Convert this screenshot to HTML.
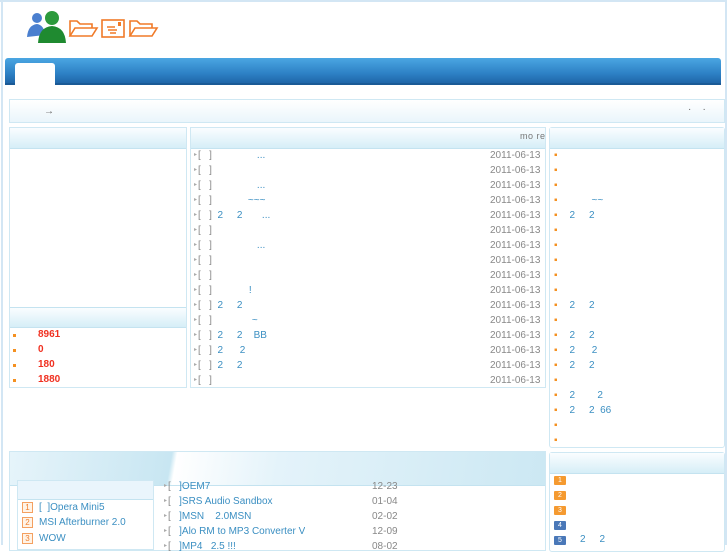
<!DOCTYPE html>
<html><head><meta charset="utf-8"><style>
*{margin:0;padding:0;box-sizing:border-box}
body{width:727px;height:545px;overflow:hidden;background:#fff;font-family:"Liberation Sans","Noto Sans CJK SC",sans-serif;font-size:10px;color:#888;position:relative}
.a{position:absolute;white-space:nowrap}
.l>div{height:15px;line-height:15px;overflow:hidden}
.box{position:absolute;border:1px solid #cfe8f3;background:#fff}
.hd{position:absolute;left:0;right:0;top:0;background:linear-gradient(#fafdff,#d6eef7);border-bottom:1px solid #c4e3f0}
.b{color:#3b8fc2}
.r{color:#f03020;font-weight:bold}
.dot{position:absolute;width:3px;height:3px;background:#f49020}
.tri{color:#aaa;font-size:6px;vertical-align:middle;margin-right:1px}
.bd{position:absolute;width:12px;height:9px;border-radius:1px;color:#fff;font-size:7px;text-align:center;line-height:9px}
.nb{position:absolute;width:11px;height:11px;border:1px solid #f4a060;background:#fff3e6;color:#f08030;font-size:8px;text-align:center;line-height:9px}
</style></head><body>
<div class="a" style="left:1px;top:0;width:2px;height:545px;background:#d3e6f4"></div>
<div class="a" style="left:725px;top:0;width:2px;height:545px;background:#d3e6f4"></div>
<div class="a" style="left:0;top:0;width:727px;height:2px;background:#d3e6f4"></div>
<svg class="a" style="left:24px;top:9px" width="140" height="36" viewBox="0 0 140 36">
<circle cx="13" cy="9" r="5" fill="#4a7fcf"/><path d="M3 28 Q4 16 13 15 Q20 16 21 26 Z" fill="#4a7fcf"/>
<circle cx="28" cy="9" r="7" fill="#2c9a3c"/><path d="M14 34 Q15 18 28 17 Q41 18 42 34 Z" fill="#1f8a30"/>
<g fill="none" stroke="#f07a28" stroke-width="1.6">
<path d="M46 27 L46 12 L53 12 L56 15 L68 15 L68 19"/><path d="M46 27 L51 19 L73 19 L68 27 Z"/>
<rect x="78" y="11" width="22" height="17"/><path d="M83 18h8M84 21h9M86 24h6"/>
<path d="M106 27 L106 12 L113 12 L116 15 L128 15 L128 19"/><path d="M106 27 L111 19 L133 19 L128 27 Z"/>
</g><rect x="94" y="13" width="3" height="4" fill="#f07a28"/>
</svg>
<div class="a" style="left:5px;top:58px;width:716px;height:27px;border-radius:3px 3px 0 0;background:linear-gradient(#4ba6e2,#2e82c6 60%,#1f66a8);border-bottom:2px solid #1a5a96"></div>
<div class="a" style="left:15px;top:63px;width:40px;height:22px;background:#fff;border-radius:3px 3px 0 0"></div>
<div class="a" style="left:9px;top:99px;width:716px;height:24px;border:1px solid #cfe8f3;background:linear-gradient(#fff,#eaf5fb)"></div>
<div class="a" style="left:44px;top:106px;color:#666">→</div>
<div class="a" style="left:688px;top:104px;color:#666">·&nbsp;&nbsp;&nbsp;&nbsp;·</div>
<div class="box" style="left:9px;top:127px;width:178px;height:261px"><div class="hd" style="height:21px"></div><div class="hd" style="top:179px;height:21px;border-top:1px solid #c4e3f0"></div></div>
<div class="dot" style="left:13px;top:334px"></div><div class="a r" style="left:38px;top:329px">8961</div>
<div class="dot" style="left:13px;top:349px"></div><div class="a r" style="left:38px;top:344px">0</div>
<div class="dot" style="left:13px;top:364px"></div><div class="a r" style="left:38px;top:359px">180</div>
<div class="dot" style="left:13px;top:379px"></div><div class="a r" style="left:38px;top:374px">1880</div>
<div class="box" style="left:190px;top:127px;width:356px;height:261px"><div class="hd" style="height:21px"></div></div>
<div class="a" style="left:520px;top:131px;color:#777;font-size:9px;letter-spacing:0.5px">mo re</div>
<div class="a l" style="left:194px;top:148px">
<div><span class="tri">▸</span>[&nbsp;&nbsp;&nbsp;]<span class="b" style="margin-left:45px">...</span></div>
<div><span class="tri">▸</span>[&nbsp;&nbsp;&nbsp;]</div>
<div><span class="tri">▸</span>[&nbsp;&nbsp;&nbsp;]<span class="b" style="margin-left:45px">...</span></div>
<div><span class="tri">▸</span>[&nbsp;&nbsp;&nbsp;]<span class="b" style="margin-left:36px">~~~</span></div>
<div><span class="tri">▸</span>[&nbsp;&nbsp;&nbsp;]&nbsp;&nbsp;<span class="b">2&nbsp;&nbsp;&nbsp;&nbsp;&nbsp;2&nbsp;&nbsp;&nbsp;&nbsp;&nbsp;&nbsp;&nbsp;...</span></div>
<div><span class="tri">▸</span>[&nbsp;&nbsp;&nbsp;]</div>
<div><span class="tri">▸</span>[&nbsp;&nbsp;&nbsp;]<span class="b" style="margin-left:45px">...</span></div>
<div><span class="tri">▸</span>[&nbsp;&nbsp;&nbsp;]</div>
<div><span class="tri">▸</span>[&nbsp;&nbsp;&nbsp;]</div>
<div><span class="tri">▸</span>[&nbsp;&nbsp;&nbsp;]<span class="b" style="margin-left:37px">!</span></div>
<div><span class="tri">▸</span>[&nbsp;&nbsp;&nbsp;]&nbsp;&nbsp;<span class="b">2&nbsp;&nbsp;&nbsp;&nbsp;&nbsp;2</span></div>
<div><span class="tri">▸</span>[&nbsp;&nbsp;&nbsp;]<span class="b" style="margin-left:40px">~</span></div>
<div><span class="tri">▸</span>[&nbsp;&nbsp;&nbsp;]&nbsp;&nbsp;<span class="b">2&nbsp;&nbsp;&nbsp;&nbsp;&nbsp;2&nbsp;&nbsp;&nbsp;&nbsp;BB</span></div>
<div><span class="tri">▸</span>[&nbsp;&nbsp;&nbsp;]&nbsp;&nbsp;<span class="b">2&nbsp;&nbsp;&nbsp;&nbsp;&nbsp;&nbsp;2</span></div>
<div><span class="tri">▸</span>[&nbsp;&nbsp;&nbsp;]&nbsp;&nbsp;<span class="b">2&nbsp;&nbsp;&nbsp;&nbsp;&nbsp;2</span></div>
<div><span class="tri">▸</span>[&nbsp;&nbsp;&nbsp;]</div>
</div>
<div class="a" style="left:490px;top:148px;line-height:15px;width:50px;text-align:right;color:#888">
2011-06-13<br>2011-06-13<br>2011-06-13<br>2011-06-13<br>2011-06-13<br>2011-06-13<br>2011-06-13<br>2011-06-13<br>2011-06-13<br>2011-06-13<br>2011-06-13<br>2011-06-13<br>2011-06-13<br>2011-06-13<br>2011-06-13<br>2011-06-13</div>
<div class="box" style="left:549px;top:127px;width:176px;height:321px;border-radius:3px"><div class="hd" style="height:21px"></div></div>
<div class="a l" style="left:554px;top:148px">
<div><span style="color:#f49020">▪</span></div>
<div><span style="color:#f49020">▪</span></div>
<div><span style="color:#f49020">▪</span></div>
<div><span style="color:#f49020">▪</span><span class="b" style="margin-left:34px">~~</span></div>
<div><span style="color:#f49020">▪</span><span class="b" style="margin-left:12px">2&nbsp;&nbsp;&nbsp;&nbsp;&nbsp;2</span></div>
<div><span style="color:#f49020">▪</span></div>
<div><span style="color:#f49020">▪</span></div>
<div><span style="color:#f49020">▪</span></div>
<div><span style="color:#f49020">▪</span></div>
<div><span style="color:#f49020">▪</span></div>
<div><span style="color:#f49020">▪</span><span class="b" style="margin-left:12px">2&nbsp;&nbsp;&nbsp;&nbsp;&nbsp;2</span></div>
<div><span style="color:#f49020">▪</span></div>
<div><span style="color:#f49020">▪</span><span class="b" style="margin-left:12px">2&nbsp;&nbsp;&nbsp;&nbsp;&nbsp;2</span></div>
<div><span style="color:#f49020">▪</span><span class="b" style="margin-left:12px">2&nbsp;&nbsp;&nbsp;&nbsp;&nbsp;&nbsp;2</span></div>
<div><span style="color:#f49020">▪</span><span class="b" style="margin-left:12px">2&nbsp;&nbsp;&nbsp;&nbsp;&nbsp;2</span></div>
<div><span style="color:#f49020">▪</span></div>
<div><span style="color:#f49020">▪</span><span class="b" style="margin-left:12px">2&nbsp;&nbsp;&nbsp;&nbsp;&nbsp;&nbsp;&nbsp;&nbsp;2</span></div>
<div><span style="color:#f49020">▪</span><span class="b" style="margin-left:12px">2&nbsp;&nbsp;&nbsp;&nbsp;&nbsp;2&nbsp;&nbsp;66</span></div>
<div><span style="color:#f49020">▪</span></div>
<div><span style="color:#f49020">▪</span></div>
</div>
<div class="box" style="left:9px;top:451px;width:537px;height:100px"><div class="hd" style="height:34px;background:linear-gradient(100deg,#e6f4fa 0%,#c8e6f2 30%,#fff 31%,#e4f3fa 50%,#cce8f3 100%)"></div></div>
<div class="box" style="left:17px;top:480px;width:137px;height:70px"><div class="hd" style="height:19px;background:#eaf5fc"></div></div>
<div class="nb" style="left:22px;top:502px">1</div><div class="a b" style="left:39px;top:502px">[&nbsp;&nbsp;]Opera Mini5</div>
<div class="nb" style="left:22px;top:517px">2</div><div class="a b" style="left:39px;top:517px">MSI Afterburner 2.0</div>
<div class="nb" style="left:22px;top:533px">3</div><div class="a b" style="left:39px;top:533px">WOW</div>
<div class="a l" style="left:164px;top:479px">
<div><span class="tri">▸</span>[&nbsp;&nbsp;&nbsp;<span class="b">]OEM7</span></div>
<div><span class="tri">▸</span>[&nbsp;&nbsp;&nbsp;<span class="b">]SRS Audio Sandbox</span></div>
<div><span class="tri">▸</span>[&nbsp;&nbsp;&nbsp;<span class="b">]MSN&nbsp;&nbsp;&nbsp;&nbsp;2.0MSN</span></div>
<div><span class="tri">▸</span>[&nbsp;&nbsp;&nbsp;<span class="b">]Alo RM to MP3 Converter V</span></div>
<div><span class="tri">▸</span>[&nbsp;&nbsp;&nbsp;<span class="b">]MP4&nbsp;&nbsp;&nbsp;2.5 !!!</span></div>
</div>
<div class="a" style="left:372px;top:479px;line-height:15px;color:#888">12-23<br>01-04<br>02-02<br>12-09<br>08-02</div>
<div class="box" style="left:549px;top:452px;width:176px;height:100px;border-radius:3px"><div class="hd" style="height:21px"></div></div>
<div class="bd" style="left:554px;top:476px;background:#f59a30">1</div>
<div class="bd" style="left:554px;top:491px;background:#f59a30">2</div>
<div class="bd" style="left:554px;top:506px;background:#f59a30">3</div>
<div class="bd" style="left:554px;top:521px;background:#4a78b8">4</div>
<div class="bd" style="left:554px;top:536px;background:#4a78b8">5</div>
<div class="a b" style="left:580px;top:534px">2&nbsp;&nbsp;&nbsp;&nbsp;&nbsp;2</div>
</body></html>
